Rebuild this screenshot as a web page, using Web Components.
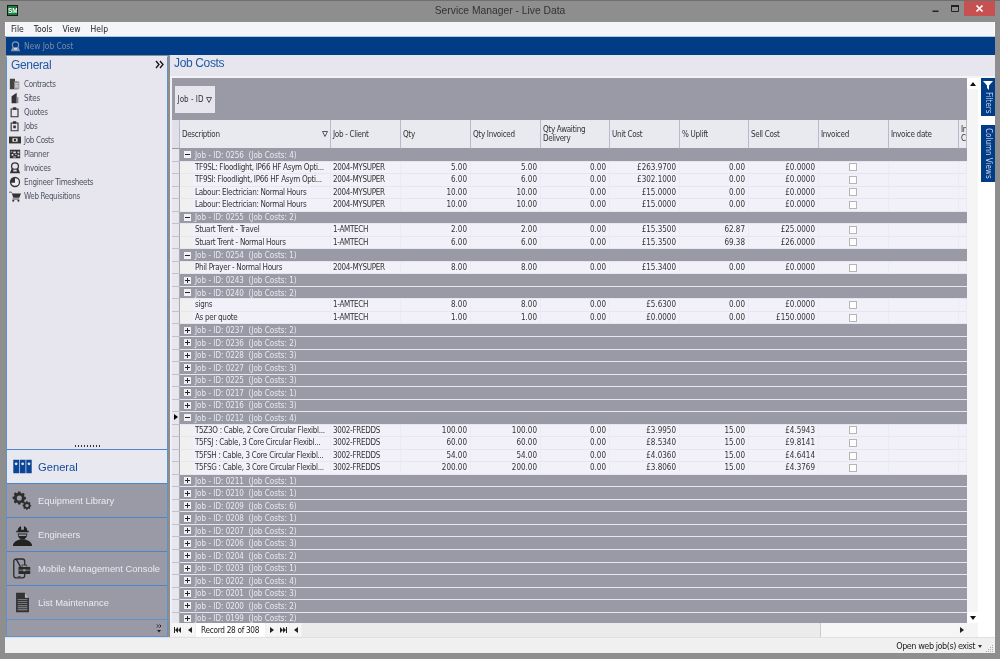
<!DOCTYPE html>
<html><head><meta charset="utf-8">
<style>
:root{--t:"DejaVu Sans Condensed","DejaVu Sans",sans-serif;--a:"Liberation Sans",Arial,sans-serif}
html,body{margin:0;padding:0;height:100%;overflow:hidden;background:#8e8e8e}
body{font:8px var(--t);font-stretch:condensed}
</style></head><body>
<sm-window>
  <sm-titlebar slot="title">Service Manager - Live Data</sm-titlebar>
  <sm-menubar slot="menu"><span>File</span><span>Tools</span><span>View</span><span>Help</span></sm-menubar>
  <sm-toolbar slot="tools">New Job Cost</sm-toolbar>
  <sm-sidebar slot="side">
    <sm-nav icon="contracts">Contracts</sm-nav>
    <sm-nav icon="sites">Sites</sm-nav>
    <sm-nav icon="quotes">Quotes</sm-nav>
    <sm-nav icon="jobs">Jobs</sm-nav>
    <sm-nav icon="costs">Job Costs</sm-nav>
    <sm-nav icon="planner">Planner</sm-nav>
    <sm-nav icon="invoices">Invoices</sm-nav>
    <sm-nav icon="time">Engineer Timesheets</sm-nav>
    <sm-nav icon="cart">Web Requisitions</sm-nav>
    <sm-section slot="sections" icon="binders" active>General</sm-section>
    <sm-section slot="sections" icon="gears">Equipment Library</sm-section>
    <sm-section slot="sections" icon="engineer">Engineers</sm-section>
    <sm-section slot="sections" icon="mobile">Mobile Management Console</sm-section>
    <sm-section slot="sections" icon="doc">List Maintenance</sm-section>
  </sm-sidebar>
  <sm-jobcosts slot="main"></sm-jobcosts>
  <sm-status slot="status">Open web job(s) exist</sm-status>
</sm-window>
<script>
const ICONS={
contracts:'<path fill="#444" d="M1 1h6v3h3v9H1z"/><path fill="#999" d="M6 4h6v9H6z"/><path fill="#ddd" d="M7 6h4v1H7zM7 8h4v1H7zM7 10h4v1H7z"/>',
sites:'<path fill="#333" d="M3 13V5l6-4v12z"/><path fill="#888" d="M9 13V6h2v7z"/>',
quotes:'<path fill="none" stroke="#333" stroke-width="1.3" d="M2.5 3.5h8v9h-8z"/><path fill="#333" d="M4.5 1.5h4v3h-4z"/>',
jobs:'<path fill="none" stroke="#333" stroke-width="1.3" d="M2.5 3.5h8v9h-8z"/><path fill="#333" d="M4.5 1.5h4v3h-4zM5 6.500h3v3H5z"/>',
costs:'<path fill="#333" d="M0 3h14v8H0z"/><path fill="#eee" d="M4 5h6v4H4z"/><circle cx="7" cy="7" r="1.500" fill="#333"/>',
planner:'<path fill="#333" d="M1 2h12v10H1z"/><path fill="#ddd" d="M2 4h2v1H2zM5 4h3v2H5zM10 4h2v2h-2zM3 7h2v2H3zM7 7h2v1H7zM10 8h2v2h-2zM5 10h3v1H5z"/>',
invoices:'<circle cx="7" cy="5" r="4" fill="none" stroke="#333" stroke-width="1.500"/><path fill="#333" d="M1 13l2-5h8l2 5z"/><path fill="#ddd" d="M5 9h4v2H5z"/>',
time:'<circle cx="7" cy="7" r="6" fill="#333"/><path fill="#eee" d="M7 2.500a4.500 4.500 0 0 1 0 9 4.500 4.500 0 0 1-4.400-3.500H7z"/>',
cart:'<path fill="#333" d="M0 2h3l1 2h10l-2 5H5L3 3H0z"/><path fill="#333" d="M4 10h8v1H4z"/><circle cx="5" cy="12.500" r="1.200" fill="#333"/><circle cx="11" cy="12.500" r="1.200" fill="#333"/>',
binders:'<path fill="#0b4596" d="M0 1h8.500v20H0zM9.500 1H18v20H9.500zM19 1h8v20h-8z"/><circle cx="4.200" cy="7" r="2" fill="#e8e8f0"/><circle cx="13.700" cy="7" r="2" fill="#e8e8f0"/><circle cx="23" cy="7" r="2" fill="#e8e8f0"/>',
gears:'<g fill="#2d2d2d"><path d="M10 1h4l.6 2.600 2 .8L19 3l2.800 2.800-1.400 2.400.8 2 2.600.6v4l-2.600.6-.8 2 1.400 2.400L19 22l-2.400-1.400-2 .8L14 24h-4l-.6-2.600-2-.8L5 22l-2.800-2.800 1.400-2.400-.8-2L.2 14.200v-4l2.600-.6.8-2L2.200 5.200 5 2.400l2.400 1.400 2-.8z" transform="scale(.62)"/><path d="M10 1h4l.6 2.600 2 .8L19 3l2.800 2.800-1.400 2.400.8 2 2.600.6v4l-2.600.6-.8 2 1.400 2.400L19 22l-2.400-1.400-2 .8L14 24h-4l-.6-2.600-2-.8L5 22l-2.800-2.800 1.400-2.400-.8-2L.2 14.200v-4l2.600-.6.8-2L2.200 5.200 5 2.400l2.400 1.400 2-.8z" transform="translate(11 11) scale(.4)"/></g><circle cx="7.500" cy="7.800" r="2.800" fill="#9a9aa6"/><circle cx="16" cy="16" r="1.800" fill="#9a9aa6"/>',
engineer:'<path fill="#222" d="M1 24c0-4 4-6 8-7h4c4 1 8 3 8 7z"/><path fill="#222" d="M6 8a5 5 0 0 1 10 0h1.500v1.500h-13V8z"/><path fill="#222" d="M6 11h10c0 4-2 6-5 6s-5-2-5-6z"/><path fill="#9a9aa6" d="M9.500 3h3v4h-3zM7 12h8v1.500H7z"/>',
mobile:'<path fill="none" stroke="#2b2b2b" stroke-width="1.700" d="M4 .9h8a3 3 0 0 1 3 3V9M15 21v1a3 3 0 0 1-3 3H4a3 3 0 0 1-3-3V3.900a3 3 0 0 1 3-3z"/><path fill="#2b2b2b" d="M7 11h15v9H7z"/><path fill="#9a9aa6" d="M7 14.500h15v1H7zM13 14h3v2.500h-3z"/><path fill="none" stroke="#2b2b2b" d="M11.500 10.500v-2h6v2"/><path fill="#2b2b2b" d="M6 23h4v1H6z"/>',
doc:'<path fill="#333" d="M1 1h11l5 6v18H1z"/><path fill="#bbb" d="M12 1l5 6h-5z"/><g fill="#8f8f9b"><path d="M3 9h12v1H3zM3 11.500h12v1H3zM3 14h12v1H3zM3 16.500h12v1H3zM3 19h12v1H3zM3 21.500h12v1H3z"/></g>'
};
const SIZES={binders:[19,15,'0 0 27 22'],gears:[21,20,'0 0 22 22'],engineer:[21,22,'1 1 20 23'],mobile:[18,21,'0 0 23 26'],doc:[15,21,'0 0 18 26']};
function def(name,css,html,extra){customElements.define(name,class extends HTMLElement{
  constructor(){super();const r=this.attachShadow({mode:'open'});r.innerHTML='<style>'+css+'</style>'+html;}
  connectedCallback(){extra&&extra.call(this,this.shadowRoot)}
});}
def('sm-window',`:host{display:grid;box-sizing:border-box;width:1000px;height:659px;background:#8e8e8e;grid-template-columns:165px minmax(0,1fr);grid-template-rows:22px 14px 19px minmax(0,1fr) 16px 6px;padding:0 5px;grid-template-areas:"t t" "m m" "b b" "s c" "f f" ". .";filter:blur(.3px)}
::slotted([slot=title]){grid-area:t}::slotted([slot=menu]){grid-area:m}::slotted([slot=tools]){grid-area:b}::slotted([slot=side]){grid-area:s}::slotted([slot=main]){grid-area:c}::slotted([slot=status]){grid-area:f}`,
'<slot name="title"></slot><slot name="menu"></slot><slot name="tools"></slot><slot name="side"></slot><slot name="main"></slot><slot name="status"></slot>');
def('sm-titlebar',`:host{display:flex;align-items:center;justify-content:center;position:relative;margin:0 -5px;font:10.300px var(--a);color:#333;padding-bottom:2px;box-sizing:border-box;border-top:1px solid #6f6f6f}
.logo{position:absolute;left:7px;top:4px;width:9px;height:9px;background:#17803c;border:1px solid #1a1a1a;color:#fff;font:bold 6.500px/9px var(--a);text-align:center;overflow:hidden}
.btns{position:absolute;right:5px;top:0;display:flex;height:15px;align-items:stretch}
.b{width:19px;display:flex;align-items:center;justify-content:center}
.x{width:31px;background:#c75050}
`,`<div class="logo">SM</div><slot></slot><div class="btns"><div class="b"><svg width="9" height="9"><path d="M1.500 6.500h6v1.500h-6z" fill="#222"/></svg></div><div class="b"><svg width="10" height="9"><path d="M1.500 1.500h7v6h-7z" fill="none" stroke="#222"/><path d="M1 1h8v2H1z" fill="#222"/></svg></div><div class="b x"><svg width="9" height="9"><path d="M1.500 1.500l6 6m0-6l-6 6" stroke="#fff" stroke-width="1.700"/></svg></div></div>`);
def('sm-menubar',`:host{display:flex;align-items:center;background:#f4f5f9;padding-left:5px;gap:10px;font-size:8.500px;color:#222;border-left:1px solid #fff;border-right:1px solid #fff;box-sizing:border-box}`,'<slot></slot>');
def('sm-toolbar',`:host{display:flex;align-items:center;background:#013c87;color:#7d8aa6;font-size:8.500px;letter-spacing:-.1px;padding-left:4px;gap:3px;border-top:1px solid #b8c4d8;margin-left:1px}`,
`<svg width="11" height="11" viewBox="0 0 14 14">${ICONS.invoices.replace(/#333/g,'#8795b2')}</svg><slot></slot>`);
def('sm-sidebar',`:host{display:flex;flex-direction:column;background:#e7e6ef;box-sizing:border-box;border:1px solid #5b93d1;border-top-color:#e4eaf4;margin:1px 2px 0 1px;min-height:0}
.head{display:flex;justify-content:space-between;align-items:center;height:15px;flex:none;padding:0 3px 0 4px;color:#1f5aa3;font:12px var(--a);letter-spacing:-.35px}
.head svg{display:block}
.items{display:flex;flex-direction:column;margin-top:5px;padding-left:2px;flex:1;min-height:0}
.grip{height:11px;flex:none;display:flex;justify-content:center;align-items:flex-end;padding:0 0 2px 0;box-sizing:border-box}
.grip i{width:25px;height:2px;background:repeating-linear-gradient(90deg,#333 0 1px,transparent 1px 3px)}
.sections{display:flex;flex-direction:column;flex:none}
.foot{height:16px;flex:none;background:#9a9aa6;border-top:1px solid #5b93d1;display:flex;justify-content:flex-end;align-items:center;padding-right:5px}`,
`<div class="head"><span>General</span><svg width="9" height="9" viewBox="0 0 9 9"><path d="M1 1l3 3.500L1 8M5 1l3 3.500L5 8" fill="none" stroke="#111" stroke-width="1.300"/></svg></div><div class="items"><slot></slot></div><div class="grip"><i></i></div><div class="sections"><slot name="sections"></slot></div><div class="foot"><svg width="6" height="9" viewBox="0 0 6 9"><path d="M1 .5l1.500 1.500L1 3.500M3.500 .5L5 2 3.500 3.500" fill="none" stroke="#222"/><path d="M1 6h4L3 8.500z" fill="#222"/></svg></div>`);
def('sm-nav',`:host{display:flex;align-items:center;height:14px;gap:3px;font-size:8px;letter-spacing:-.35px;color:#4e5460}
svg{width:12px;height:12px;flex:none}`,'<svg viewBox="0 0 14 14"></svg><slot></slot>',
function(r){r.querySelector('svg').innerHTML=ICONS[this.getAttribute('icon')]});
def('sm-section',`:host{display:flex;align-items:center;height:34px;box-sizing:border-box;background:#9a9aa6;color:#eaeaf0;font:9.400px var(--a);border-top:1px solid #4c86c8;padding-left:3px;gap:4px;white-space:nowrap}
:host([active]){background:#e8e8f1;color:#124a96;font-size:11.200px}
.i{width:24px;height:26px;display:flex;align-items:center;justify-content:center;flex:none}`,'<div class="i"><svg></svg></div><slot></slot>',
function(r){const k=this.getAttribute('icon'),s=r.querySelector('svg'),z=SIZES[k];s.setAttribute('width',z[0]);s.setAttribute('height',z[1]);s.setAttribute('viewBox',z[2]);s.innerHTML=ICONS[k]});
def('sm-status',`:host{display:flex;align-items:center;justify-content:flex-end;background:#f0f0f0;font-size:9px;letter-spacing:-.45px;color:#222;padding-right:1px;gap:3px;border-top:1px solid #e0e0e0;box-sizing:border-box}
i{width:0;height:0;border:2.500px solid transparent;border-top:3px solid #333;margin:3px 0 0 0}
svg{margin-top:5px}`,'<slot></slot><i></i><svg width="9" height="9"><path d="M7 1h1v1H7zM5 3h1v1H5zM7 3h1v1H7zM3 5h1v1H3zM5 5h1v1H5zM7 5h1v1H7zM1 7h1v1H1zM3 7h1v1H3zM5 7h1v1H5zM7 7h1v1H7z" fill="#aaa"/></svg>');

const COLS=[['Description',151],['Job - Client',70],['Qty',70],['Qty Invoiced',70],['Qty Awaiting Delivery',69],['Unit Cost',70],['% Uplift',69],['Sell Cost',70],['Invoiced',70],['Invoice date',70],['Invoice Cost',8]];
const cols='8px '+COLS.map(c=>c[1]+'px').join(' ');
const T='TF9SL: Floodlight, IP66 HF Asym Opti...',T2='TF9SI: Floodlight, IP66 HF Asym Opti...',L='Labour: Electrician: Normal Hours';
const C2='T5Z3O : Cable, 2 Core Circular Flexibl...',C3=c=>c+' : Cable, 3 Core Circular Flexibl...';
const DATA=[
['0256',4,'-',[[T,'2004-MYSUPER','5.00','5.00','0.00','£263.9700','0.00','£0.0000'],[T2,'2004-MYSUPER','6.00','6.00','0.00','£302.1000','0.00','£0.0000'],[L,'2004-MYSUPER','10.00','10.00','0.00','£15.0000','0.00','£0.0000'],[L,'2004-MYSUPER','10.00','10.00','0.00','£15.0000','0.00','£0.0000']]],
['0255',2,'-',[['Stuart Trent - Travel','1-AMTECH','2.00','2.00','0.00','£15.3500','62.87','£25.0000'],['Stuart Trent - Normal Hours','1-AMTECH','6.00','6.00','0.00','£15.3500','69.38','£26.0000']]],
['0254',1,'-',[['Phil Prayer - Normal Hours','2004-MYSUPER','8.00','8.00','0.00','£15.3400','0.00','£0.0000']]],
['0243',1],
['0240',2,'-',[['signs','1-AMTECH','8.00','8.00','0.00','£5.6300','0.00','£0.0000'],['As per quote','1-AMTECH','1.00','1.00','0.00','£0.0000','0.00','£150.0000']]],
['0237',2],['0236',2],['0228',3],['0227',3],['0225',3],['0217',1],['0216',3],
['0212',4,'-',[[C2,'3002-FREDDS','100.00','100.00','0.00','£3.9950','15.00','£4.5943'],[C3('T5FSJ'),'3002-FREDDS','60.00','60.00','0.00','£8.5340','15.00','£9.8141'],[C3('T5FSH'),'3002-FREDDS','54.00','54.00','0.00','£4.0360','15.00','£4.6414'],[C3('T5FSG'),'3002-FREDDS','200.00','200.00','0.00','£3.8060','15.00','£4.3769']]],
['0211',1],['0210',1],['0209',6],['0208',1],['0207',2],['0206',3],['0204',2],['0203',1],['0202',4],['0201',3],['0200',2],['0199',2]];

def('sm-group',`:host{display:flex;height:12.54px;box-sizing:border-box;color:#eaeaf0;font-size:8px;line-height:11px;white-space:pre}
.s{width:8px;flex:none;background:#e7e6ef;border-bottom:1px solid #c2c2cf;border-right:1px solid #aaa;box-sizing:border-box;position:relative}
:host([current]) .s::after{content:"";position:absolute;left:2px;top:2px;border:3.500px solid transparent;border-left:4px solid #000}
.r{flex:1;display:flex;align-items:center;background:#9a9aa6;border-bottom:1px solid #e6e6ef;box-sizing:border-box;padding-left:4px;gap:4px}
.t{padding-top:1px}
.b{width:7px;height:7px;background:#f0f0f5;position:relative;flex:none}
.b::before{content:"";position:absolute;left:1px;right:1px;top:3px;height:1px;background:#222}
:host([plus]) .b::after{content:"";position:absolute;top:1px;bottom:1px;left:3px;width:1px;background:#222}`,
'<div class="s"></div><div class="r"><div class="b"></div><span class="t"><slot></slot></span></div>');
def('sm-row',`:host{display:grid;grid-template-columns:${cols};height:12.54px;font-size:8px;line-height:12px;color:#333;box-sizing:border-box}
.s{background:#e7e6ef;border-bottom:1px solid #c2c2cf;border-right:1px solid #aaa;box-sizing:border-box}
.c{background:#f2f1f9;border-bottom:1px solid #e6e6ef;border-right:1px solid #ebebf3;box-sizing:border-box;padding:0 3px 0 2px;overflow:hidden;white-space:nowrap}
.r{text-align:right}.d{padding-left:15px;position:relative;letter-spacing:-.3px}
.j{letter-spacing:-.3px}
.d::before{content:"";position:absolute;left:0;top:0;bottom:-1px;width:13px;background:#f0f0f0}
.d span{position:relative}
.k{display:flex;align-items:center;justify-content:center}
.k i{width:6px;height:6px;border:1px solid #b5b5b5;background:#fff}`,'',function(r){
  const v=JSON.parse(this.dataset.v);
  const ws=[`<div class="s"></div>`,`<div class="c d"><span>${v[0]}</span></div>`,`<div class="c j">${v[1]}</div>`];
  for(let i=2;i<8;i++)ws.push(`<div class="c r">${v[i]}</div>`);
  ws.push('<div class="c k"><i></i></div><div class="c"></div><div class="c"></div>');
  r.innerHTML+=ws.join('');
});
def('sm-jobcosts',`:host{display:flex;flex-direction:column;position:relative;min-width:0;min-height:0;background:#f0f0f0}
.title{height:23px;flex:none;background:#e7e6ef;color:#1f5aa3;font:12px var(--a);letter-spacing:-.35px;padding:1px 0 0 4px;box-sizing:border-box;border-bottom:2px solid #f4f4f4}
.body{display:flex;flex:1;min-height:0;background:#fff}
.lead{width:2px;flex:none;background:#f0f0f0}
.gridwrap{width:795px;display:flex;flex-direction:column;flex:none;position:relative;overflow:hidden;min-height:0}
.panel{height:42px;background:#9a9aa6;padding:8px 0 0 3px;box-sizing:border-box;flex:none}
.chip{width:40px;height:27px;background:#e7e6ef;display:flex;align-items:center;justify-content:center;gap:3px;font-size:8px;color:#333}
.hdr{display:grid;grid-template-columns:${cols};height:29px;flex:none;font-size:8px;line-height:9px;letter-spacing:-.3px;color:#333}
.hdr>div{background:#e9e9f0;border-right:1px solid #b9b9cb;border-bottom:1px solid #9a9aa6;display:flex;align-items:center;padding-left:2px;box-sizing:border-box;overflow:hidden;position:relative;white-space:normal}
.hdr>div:first-child{padding:0;background:#e1e0ea}
.hdr svg{position:absolute;right:2px;top:11px}
.rows{flex:1;overflow:hidden;min-height:0}
.pager{height:14px;flex:none;background:#f0f0f0;display:flex;align-items:stretch;font-size:8.200px;letter-spacing:-.3px;line-height:14px;color:#222}
.pb{width:11px;height:13px;margin-left:1px;background:#f5f5f5;display:flex;align-items:center;justify-content:center;flex:none}
.pb:first-child{margin-left:0}
.rec{width:69px;background:#fff;padding-left:5px;box-sizing:border-box;flex:none;margin-left:1px;white-space:nowrap}
.hs{flex:1;display:flex;justify-content:space-between;background:#f6f6f6;margin-left:1px}
.th{width:518px;background:#ebebeb;border-right:1px solid #ccc}
.vs{width:11px;flex:none;background:#f5f5f5;display:flex;flex-direction:column;justify-content:space-between;padding:0 0 14px 0;box-sizing:border-box}
.vb{height:11px;background:#fff;display:flex;align-items:center;justify-content:center}
.tabs{width:17px;flex:none;display:flex;flex-direction:column;gap:9px;padding:0 0 0 3px;box-sizing:border-box;background:#fff}
.tab{width:14px;background:#013c87;color:#c9d4ea;font-size:8px;writing-mode:vertical-rl;display:flex;align-items:center;justify-content:center;box-sizing:border-box;white-space:nowrap}
.tab.f{height:38px;justify-content:flex-end;padding-bottom:2px;position:relative}
.tab.f svg{position:absolute;top:3px;left:2px}
.tab.v{height:57px}`,
`<div class="title">Job Costs</div><div class="body"><div class="lead"></div><div class="gridwrap"><div class="panel"><div class="chip">Job - ID<svg width="6" height="6" viewBox="0 0 6 6"><path d="M.5.500h5L3 5.500z" fill="none" stroke="#333" stroke-width=".8"/></svg></div></div>
<div class="hdr"><div></div>${COLS.map((c,i)=>`<div>${c[0]}${i==0?'<svg width="6" height="6" viewBox="0 0 6 6"><path d="M.5.500h5L3 5.500z" fill="none" stroke="#333" stroke-width=".8"/></svg>':''}</div>`).join('')}</div>
<div class="rows" id="rows"></div>
<div class="pager"><div class="pb"><svg width="7" height="6"><path d="M0 0h1v6H0zM4 0v6L1 3zM7 0v6L4 3z" fill="#222"/></svg></div><div class="pb"><svg width="4" height="6"><path d="M4 0v6L0 3z" fill="#222"/></svg></div><div class="rec">Record 28 of 308</div><div class="pb"><svg width="4" height="6"><path d="M0 0v6l4-3z" fill="#222"/></svg></div><div class="pb"><svg width="7" height="6"><path d="M6 0h1v6H6zM3 0v6l3-3zM0 0v6l3-3z" fill="#222"/></svg></div><div class="pb"><svg width="4" height="6"><path d="M4 0v6L0 3z" fill="#222"/></svg></div><div class="hs"><div class="th"></div><div class="pb" style="margin:0"><svg width="4" height="6"><path d="M0 0v6l4-3z" fill="#222"/></svg></div></div></div>
</div><div class="vs"><div class="vb"><svg width="6" height="4"><path d="M0 4h6L3 0z" fill="#111"/></svg></div><div class="vb"><svg width="6" height="4"><path d="M0 0h6L3 4z" fill="#111"/></svg></div></div>
<div class="tabs"><div class="tab f"><svg width="10" height="9"><path d="M0 0h10L6 4.500V9L4 7V4.500z" fill="#fff"/></svg>Filters</div><div class="tab v">Column Views</div></div></div>`,
function(r){
  const host=r.getElementById('rows');
  DATA.forEach(d=>{
    const g=document.createElement('sm-group');
    g.textContent='Job - ID: '+d[0]+'  (Job Costs: '+d[1]+')';
    if(!d[2])g.setAttribute('plus','');
    if(d[0]=='0212')g.setAttribute('current','');
    host.append(g);
    (d[3]||[]).forEach(v=>{const e=document.createElement('sm-row');e.dataset.v=JSON.stringify(v);host.append(e)});
  });
});
</script></body></html>
